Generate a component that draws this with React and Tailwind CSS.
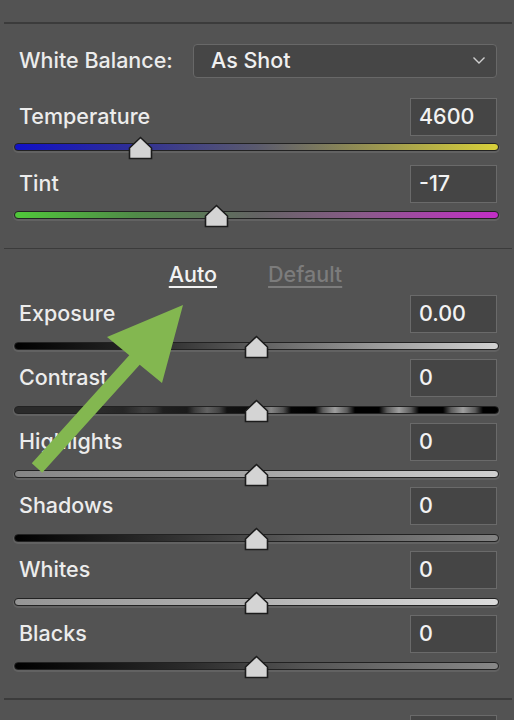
import React from "react";

const FONT = { fontFamily: '"Inter", "Noto Sans", "Liberation Sans", sans-serif' };

function Thumb({ left }) {
  return (
    <svg
      width="25"
      height="24"
      viewBox="0 0 25 24"
      className="absolute top-[-7px]"
      style={{ left: left - 12.5 }}
    >
      <path
        d="M1.5 22.5 V12 L12.5 1.5 L23.5 12 V22.5 Z"
        fill="#d4d4d4"
        stroke="#1c1c1c"
        strokeWidth="1.6"
        strokeLinejoin="miter"
      />
    </svg>
  );
}

function Track({ bg, thumb }) {
  return (
    <div className="ml-[14px] mr-[15px] h-[8px] relative">
      <div
        className={`h-full rounded-full border border-[#222] shadow-[0_1px_0_1px_#626262] ${bg}`}
      />
      <Thumb left={thumb - 14} />
    </div>
  );
}

function Header({ label, value, className = "" }) {
  return (
    <div className={`flex items-center justify-between pl-[19px] pr-[17px] ${className}`}>
      <span className="text-[21.5px] font-medium text-[#ececec] leading-none">{label}</span>
      <div className="w-[87px] h-[38px] border border-[#6a6a6a] bg-[#454545] flex items-center pl-[8px] text-[21.5px] font-medium text-[#f2f2f2] leading-none">
        {value}
      </div>
    </div>
  );
}

export default function App() {
  return (
    <div
      className="relative w-[514px] h-[720px] bg-[#535353] overflow-hidden"
      style={FONT}
    >
      <div className="h-[22px]" />
      <div className="ml-[4px] mr-[2px] h-[1.5px] bg-[#3b3b3b]" />

      {/* White balance */}
      <div className="mt-[20px] flex items-center pl-[19px] pr-[17px]">
        <span className="text-[21.5px] font-medium text-[#ececec] leading-none w-[174px]">
          White Balance:
        </span>
        <div className="flex-1 h-[34px] rounded-[4px] border border-[#686868] bg-[#464646] flex items-center justify-between pl-[17px] pr-[10px]">
          <span className="text-[21.5px] font-medium text-[#f0f0f0] leading-none">As Shot</span>
          <svg width="14" height="9" viewBox="0 0 14 9">
            <polyline
              points="1.5,1.5 7,7 12.5,1.5"
              fill="none"
              stroke="#cfcfcf"
              strokeWidth="1.4"
            />
          </svg>
        </div>
      </div>

      <Header label="Temperature" value="4600" className="mt-[20px]" />
      <div className="mt-[7px]">
        <Track
          bg="bg-[linear-gradient(90deg,#1010c8_0%,#303095_25%,#5a5a6e_50%,#8e8a55_70%,#d8d03a_100%)]"
          thumb={140}
        />
      </div>

      <Header label="Tint" value="-17" className="mt-[14px]" />
      <div className="mt-[8px]">
        <Track
          bg="bg-[linear-gradient(90deg,#50c83a_0%,#508a48_25%,#646464_50%,#8a5a8a_72%,#c42ec8_100%)]"
          thumb={216}
        />
      </div>

      <div className="mt-[29px] ml-[4px] mr-[2px] h-[1.5px] bg-[#3b3b3b]" />

      {/* Auto / Default */}
      <div className="h-[46px] pt-[6px] flex items-center justify-center gap-[51px] pr-[3px]">
        <span className="text-[21.5px] font-medium leading-none text-[#f2f2f2] underline underline-offset-[4px] decoration-[2px]">
          Auto
        </span>
        <span className="text-[21.5px] font-medium leading-none text-[#7c7c7c] underline underline-offset-[4px] decoration-[2px]">
          Default
        </span>
      </div>

      <Header label="Exposure" value="0.00" />
      <div className="mt-[9px]">
        <Track
          bg="bg-[linear-gradient(90deg,#000_0%,#2e2e2e_30%,#5e5e5e_50%,#9a9a9a_75%,#d2d2d2_100%)]"
          thumb={256}
        />
      </div>

      <Header label="Contrast" value="0" className="mt-[9px]" />
      <div className="mt-[9px]">
        <Track
          bg="bg-[linear-gradient(90deg,#2a2a2a_0%,#2a2a2a_18%,rgba(42,42,42,0.75)_30%,rgba(42,42,42,0.4)_45%,rgba(42,42,42,0)_62%),repeating-linear-gradient(90deg,#9e9e9e_0px,#5a5a5a_12px,#000_20px,#000_44px,#5a5a5a_52px,#9e9e9e_64px)]"
          thumb={256}
        />
      </div>

      <Header label="Highlights" value="0" className="mt-[9px]" />
      <div className="mt-[9px]">
        <Track
          bg="bg-[linear-gradient(90deg,#858585_0%,#a5a5a5_50%,#d0d0d0_100%)]"
          thumb={256}
        />
      </div>

      <Header label="Shadows" value="0" className="mt-[9px]" />
      <div className="mt-[9px]">
        <Track
          bg="bg-[linear-gradient(90deg,#000_0%,#353535_35%,#5c5c5c_60%,#838383_100%)]"
          thumb={256}
        />
      </div>

      <Header label="Whites" value="0" className="mt-[9px]" />
      <div className="mt-[9px]">
        <Track
          bg="bg-[linear-gradient(90deg,#959595_0%,#b3b3b3_50%,#dcdcdc_100%)]"
          thumb={256}
        />
      </div>

      <Header label="Blacks" value="0" className="mt-[9px]" />
      <div className="mt-[9px]">
        <Track
          bg="bg-[linear-gradient(90deg,#000_0%,#2a2a2a_35%,#555_60%,#888_100%)]"
          thumb={256}
        />
      </div>

      <div className="mt-[28px] ml-[4px] mr-[2px] h-[1.5px] bg-[#3b3b3b]" />
      <div className="mt-[15px] pr-[17px] flex justify-end">
        <div className="w-[87px] h-[38px] border border-[#6a6a6a] bg-[#454545]" />
      </div>

      {/* Green arrow overlay */}
      <svg
        className="absolute left-0 top-0 pointer-events-none"
        width="514"
        height="720"
        viewBox="0 0 514 720"
      >
        <polygon
          points="31.8,463.3 129.3,355.3 107,337 183,305 162,383 139.7,364.7 42.2,472.7"
          fill="#83b750"
        />
      </svg>
    </div>
  );
}
